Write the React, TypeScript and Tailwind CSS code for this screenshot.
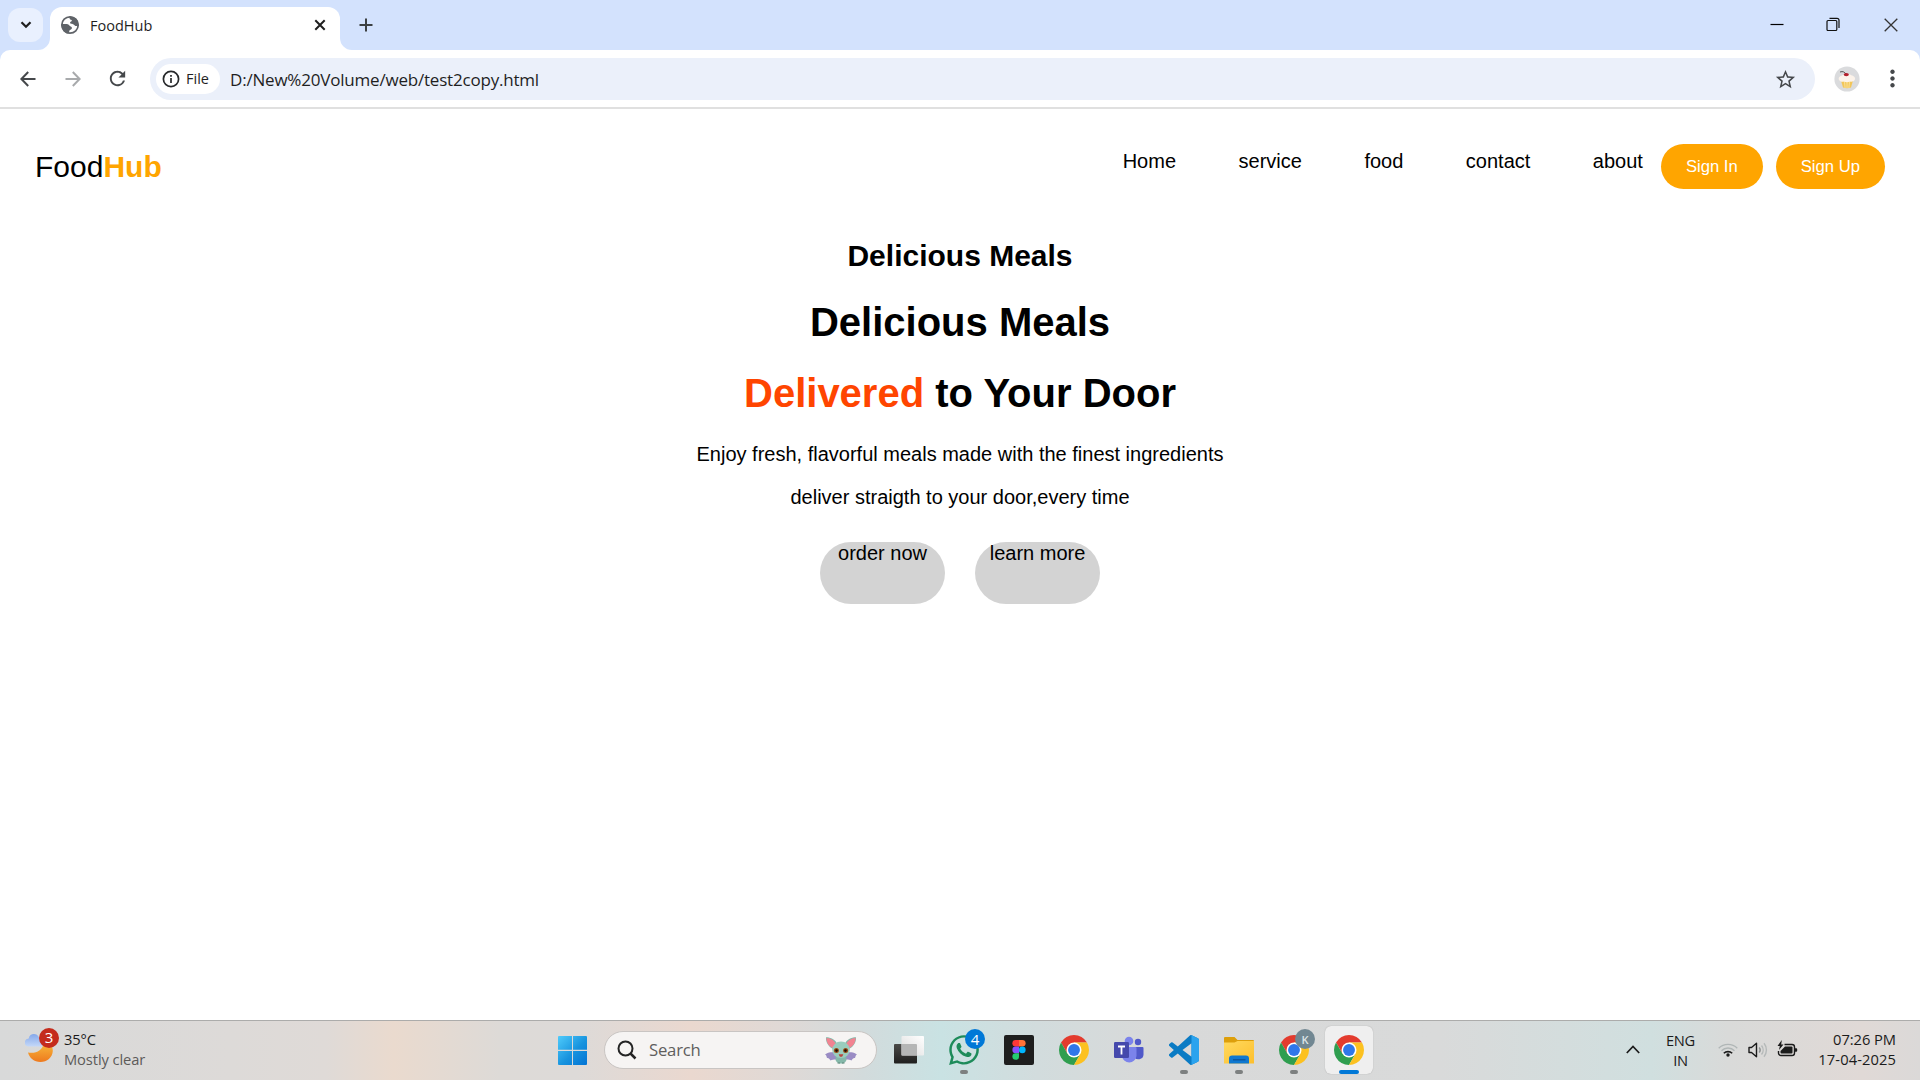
import type { ReactNode } from 'react';
import { MdRefresh, MdStarBorder, MdMoreVert } from 'react-icons/md';
import { FaWhatsapp } from 'react-icons/fa';

const UI = "font-['Open_Sans','Noto_Sans',sans-serif]";
const ARIAL = "font-['Liberation_Sans',Arial,sans-serif]";

function GlobeIcon() {
  return (
    <svg className="mt-[-7px]" width="20" height="20" viewBox="0 0 20 20">
      <circle cx="10" cy="10" r="8.200" fill="#fff" stroke="#5f6368" strokeWidth="1.700" />
      <path d="M9.500 1.500C15 1 18.800 5 18.500 10.500c-1.300.7-3 .8-4-.3-1-1.200-3-.9-4-1.600-1-.9-.2-2.100 1-2.400.8-.3.4-1.200-.5-1.400-1.300-.3-1.700-1.500-1.500-3.300z" fill="#5f6368" />
      <path d="M1.600 9h5c2 0 2.400 1.600 3.600 2.200 1.700.6 2.300 1.700 1.300 2.800-.9.900-2 .8-2.200 2-.1.900-.3 1.800-.8 2.500C4 18 1.200 14 1.600 9z" fill="#5f6368" />
    </svg>
  );
}

function TabStrip() {
  return (
    <div className="flex h-[50px] items-start bg-[#d3e2fd]">
      <div className="ml-2 mt-2 flex h-[34px] w-[35px] items-center justify-center rounded-xl bg-[#e9f0fe]">
        <svg width="12" height="8" viewBox="0 0 12 8" fill="none" stroke="#1f1f1f" strokeWidth="2.2">
          <path d="M1.5 1.2 6 5.8l4.500-4.600" />
        </svg>
      </div>
      <svg className="ml-[-5px] mt-[38px]" width="12" height="12" viewBox="0 0 12 12">
        <path d="M12 0v12H0A12 12 0 0 0 12 0z" fill="#fff" />
      </svg>
      <div className="mt-[7px] flex h-[43px] w-[290px] items-center rounded-t-xl bg-white pl-[10px] pr-[14px]">
        <GlobeIcon />
        <span className="ml-[10px] mt-[-6px] text-[14.500px] leading-5 text-[#1f1f1f]">FoodHub</span>
        <svg className="ml-auto mt-[-7px]" width="12" height="12" viewBox="0 0 12 12" stroke="#1f1f1f" strokeWidth="2">
          <path d="M1.300 1.300l9.400 9.400M10.700 1.300l-9.400 9.400" />
        </svg>
      </div>
      <svg className="mt-[38px]" width="12" height="12" viewBox="0 0 12 12">
        <path d="M0 0v12h12A12 12 0 0 1 0 0z" fill="#fff" />
      </svg>
      <svg className="ml-[7px] mt-[18px]" width="14" height="14" viewBox="0 0 14 14" stroke="#3c4043" strokeWidth="2">
        <path d="M7 .5v13M.5 7h13" />
      </svg>
      <div className="ml-auto flex items-center pr-[22px] pt-[17px]">
        <svg width="14" height="14" viewBox="0 0 14 14" stroke="#000" strokeWidth="1.2">
          <path d="M.5 6.500h13" />
        </svg>
        <svg className="ml-[42px]" width="14" height="15" viewBox="0 0 14 15" fill="none" stroke="#111" strokeWidth="1.200">
          <rect x="1" y="3.500" width="9.800" height="10" rx="1" />
          <path d="M3.500 1.300h7.500a2 2 0 0 1 2 2v7.700" />
        </svg>
        <svg className="ml-[44px]" width="14" height="14" viewBox="0 0 14 14" stroke="#333" strokeWidth="1.300">
          <path d="M.7.700l12.600 12.600M13.300.700.700 13.300" />
        </svg>
      </div>
    </div>
  );
}

function Cupcake() {
  return (
    <svg width="26" height="26" viewBox="0 0 26 26">
      <circle cx="13" cy="13" r="12.600" fill="#dadbdd" />
      <path d="M7 14.500h12l-2 7q-4 1.500-8 0z" fill="#f2c659" />
      <path d="M10.500 15l.6 7M15.500 15l-.6 7M13 15v7" stroke="#fbe19a" strokeWidth="1" />
      <path d="M4.800 13.500C4 11 7 10 7.800 9.500c1.200-2 8-2.200 9.400-.2 3 .5 4.600 2.700 3.600 4.400-1 1.800-3 2.300-4.800 1.800-1.800.9-4.200.9-6 .1-2 .6-4.400-.1-5.200-2.100z" fill="#fcf3ea" />
      <path d="M6 6c3-1 4.500 0 6 2" stroke="#555" strokeWidth="1" fill="none" />
      <ellipse cx="12.300" cy="8.600" rx="2.600" ry="1.600" fill="#b3202c" />
    </svg>
  );
}

function Toolbar() {
  return (
    <div className="bg-[#d3e2fd]">
      <div className="flex h-[59px] items-center rounded-t-[10px] border-b-2 border-[#e0e0e0] bg-white pl-5 pr-[14px]">
        <svg width="16" height="16" viewBox="0 0 16 16" fill="none" stroke="#45484b" strokeWidth="2">
          <path d="M15.500 8H1.500M8.200 1 1.400 8l6.800 7" />
        </svg>
        <svg className="ml-[29px]" width="16" height="16" viewBox="0 0 16 16" fill="none" stroke="#a8aaac" strokeWidth="2">
          <path d="M.5 8h14M7.800 1l6.800 7-6.800 7" />
        </svg>
        <MdRefresh size={23} color="#45484b" className="ml-[25px]" />
        <div className="ml-[21px] flex h-[42px] w-[1665px] items-center rounded-full bg-[#ebf0fa] pl-[6px] pr-[18px]">
          <div className="flex h-[30px] w-[64px] items-center rounded-full bg-white pl-[6px]">
            <svg width="18" height="18" viewBox="0 0 18 18" fill="none" stroke="#27292b" strokeWidth="1.700">
              <circle cx="9" cy="9" r="7.600" />
              <path d="M9 8v5M9 5v1.700" />
            </svg>
            <span className="ml-[6px] text-[14.500px] font-medium leading-5 text-[#1f1f1f]">File</span>
          </div>
          <span className="ml-[10px] mt-[2px] text-[17px] leading-6 tracking-[-0.2px] text-[#1f1f1f]">D:/New%20Volume/web/test2copy.html</span>
          <MdStarBorder size={23} color="#45484b" className="ml-auto mt-px" />
        </div>
        <div className="ml-[19px]">
          <Cupcake />
        </div>
        <MdMoreVert size={27} color="#45484b" className="ml-auto" />
      </div>
    </div>
  );
}

const links = ['Home', 'service', 'food', 'contact', 'about'];

function Page() {
  return (
    <main className={`${ARIAL} h-[911px] overflow-hidden bg-white text-black`}>
      <header className="flex items-start pl-[35px] pr-[35px] pt-[35px]">
        <div className="mt-[6px] text-[30px] leading-[34px]">
          Food<span className="font-bold text-[#ffa500]">Hub</span>
        </div>
        <nav className="ml-auto mt-[6px] flex gap-[62.500px] text-xl leading-[23px]">
          {links.map((l) => (
            <a key={l}>{l}</a>
          ))}
        </nav>
        <div className="ml-[18px] flex gap-[13px] text-[16.670px] leading-[45px] text-white">
          <button className="h-[45px] rounded-full bg-[#ffa500] px-[25px]">Sign In</button>
          <button className="h-[45px] rounded-full bg-[#ffa500] px-[25px]">Sign Up</button>
        </div>
      </header>
      <section className="mt-[50px] flex flex-col items-center text-xl leading-[23px]">
        <h2 className="text-[30px] font-bold leading-[34px]">Delicious Meals</h2>
        <h1 className="mt-[26px] text-[40px] font-bold leading-[46px]">Delicious Meals</h1>
        <h1 className="mt-[25px] text-[40px] font-bold leading-[46px]">
          <span className="text-[#ff4500]">Delivered</span> to Your Door
        </h1>
        <p className="mt-[27px]">Enjoy fresh, flavorful meals made with the finest ingredients</p>
        <p className="mt-5">deliver straigth to your door,every time</p>
        <div className="mt-[33px] flex gap-[30px]">
          <button className="flex h-[62px] w-[125px] justify-center rounded-full bg-[#d3d3d3]">order now</button>
          <button className="flex h-[62px] w-[125px] justify-center rounded-full bg-[#d3d3d3]">learn more</button>
        </div>
      </section>
    </main>
  );
}

function ChromeIcon() {
  return (
    <svg width="30" height="30" viewBox="0 0 48 48">
      <path d="M24 12h20.780A24 24 0 0 0 3.216 12L13.600 30 24 24z" fill="#e33b2e" />
      <path d="M13.600 30 3.216 12A24 24 0 0 0 24 48l10.390-18L24 24z" fill="#2f9e4f" />
      <path d="M34.390 30 24 48a24 24 0 0 0 20.780-36H24v12z" fill="#fcc120" />
      <circle cx="24" cy="24" r="12" fill="#fff" />
      <circle cx="24" cy="24" r="9.500" fill="#2f77ea" />
    </svg>
  );
}

function WhatsAppIcon() {
  return (
    <div className="relative">
      <FaWhatsapp size={34} color="#1d8b5a" className="m-[-2px]" />
      <span className="absolute left-[16px] top-[-6px] flex size-5 items-center justify-center rounded-full bg-[#0078d7] text-[15px] leading-none text-white">4</span>
    </div>
  );
}

function TaskViewIcon() {
  return (
    <svg width="30" height="30" viewBox="0 0 30 30">
      <defs>
        <linearGradient id="tvDark" x1="0" y1="0" x2="0" y2="1">
          <stop offset="0" stopColor="#4a4a48" />
          <stop offset="1" stopColor="#1f1f1e" />
        </linearGradient>
        <linearGradient id="tvLight" x1="1" y1="0" x2="0" y2="1">
          <stop offset="0" stopColor="#ffffff" />
          <stop offset="1" stopColor="#dcdcdc" />
        </linearGradient>
      </defs>
      <rect x="0" y="9" width="23" height="19.500" rx="1" fill="url(#tvDark)" />
      <rect x="7.500" y="1" width="22.500" height="19.500" rx="1" fill="url(#tvLight)" />
      <path d="M7.500 9H22a1 1 0 0 1 1 1v10.500H7.500z" fill="#b5b6b6" />
    </svg>
  );
}

function FigmaIcon() {
  return (
    <svg width="30" height="30" viewBox="0 0 30 30">
      <rect width="30" height="30" rx="2" fill="#1e1e1e" />
      <path d="M15 5h-3.300a3.300 3.300 0 0 0 0 6.600H15z" fill="#ff3737" />
      <path d="M15 5h3.300a3.300 3.300 0 0 1 0 6.600H15z" fill="#ff7237" />
      <path d="M15 11.600h-3.300a3.300 3.300 0 0 0 0 6.600H15z" fill="#874fff" />
      <circle cx="18.300" cy="14.900" r="3.300" fill="#00b6ff" />
      <path d="M15 18.200h-3.300a3.300 3.300 0 1 0 3.300 3.300z" fill="#24cb71" />
    </svg>
  );
}

function TeamsIcon() {
  return (
    <svg width="30" height="30" viewBox="0 0 30 30">
      <circle cx="24" cy="7" r="3.200" fill="#5059c9" />
      <path d="M20 12h8.500a1 1 0 0 1 1 1v6.500a5 5 0 0 1-9.500 2z" fill="#5059c9" />
      <circle cx="15" cy="6" r="4.300" fill="#7b83eb" />
      <path d="M8 12h13.500a1 1 0 0 1 1 1v8a7.300 7.300 0 0 1-14.500 0z" fill="#7b83eb" />
      <rect x="0" y="7" width="15" height="16" rx="1.200" fill="#4549ac" />
      <path d="M4 11.500h7M7.500 11.500v8" stroke="#fff" strokeWidth="1.800" />
    </svg>
  );
}

function VsCodeIcon() {
  return (
    <svg width="30" height="30" viewBox="0 0 24 24">
      <path
        d="M23.150 2.587L18.210.210a1.494 1.494 0 0 0-1.705.290l-9.460 8.630-4.120-3.128a.999.999 0 0 0-1.276.057L.327 7.261A1 1 0 0 0 .326 8.740L3.899 12 .326 15.260a1 1 0 0 0 .001 1.479L1.650 17.940a.999.999 0 0 0 1.276.057l4.120-3.128 9.460 8.630a1.492 1.492 0 0 0 1.704.290l4.942-2.377A1.500 1.500 0 0 0 24 20.060V3.939a1.500 1.500 0 0 0-.850-1.352zm-5.146 14.861L10.826 12l7.178-5.448v10.896z"
        fill="#0a7bc4"
      />
      <path d="M18 .150 23.150 2.587A1.500 1.500 0 0 1 24 3.939V20.060a1.500 1.500 0 0 1-.850 1.350L18 23.850z" fill="#2aa3ee" />
    </svg>
  );
}

function FolderIcon() {
  return (
    <svg width="30" height="30" viewBox="0 0 30 30">
      <defs>
        <linearGradient id="folder" x1="0" y1="0" x2="1" y2="1">
          <stop offset="0" stopColor="#ffd95e" />
          <stop offset="1" stopColor="#fdbf2d" />
        </linearGradient>
      </defs>
      <path d="M0 3a1 1 0 0 1 1-1h9.500l3 3H29a1 1 0 0 1 1 1v5H0z" fill="#dd9f0b" />
      <path d="M0 7.500h10.500L13.500 6H30v22.500H0z" fill="url(#folder)" />
      <path d="M5 28.500v-5a3 3 0 0 1 3-3h14a3 3 0 0 1 3 3v5z" fill="#0f78d0" />
      <path d="M9 24.800h12.500" stroke="#0a4f95" strokeWidth="1.200" />
    </svg>
  );
}

function ProfileChrome() {
  return (
    <div className="relative">
      <ChromeIcon />
      <span className="absolute left-[16px] top-[-6px] flex size-5 items-center justify-center rounded-full bg-[#718792] text-[11px] font-semibold leading-none text-[#dfe5e8]">K</span>
    </div>
  );
}

function WindowsIcon() {
  return (
    <svg width="29" height="29" viewBox="0 0 29 29">
      <defs>
        <linearGradient id="win" x1="0" y1="0" x2="1" y2="1">
          <stop offset="0" stopColor="#4fcbfb" />
          <stop offset="0.550" stopColor="#1793de" />
          <stop offset="1" stopColor="#0273d4" />
        </linearGradient>
      </defs>
      <path d="M1 0h13v13.800H0V1a1 1 0 0 1 1-1zM15 0h13a1 1 0 0 1 1 1v12.800H15zM0 15h14v14H1a1 1 0 0 1-1-1zM15 15h14v13a1 1 0 0 1-1 1H15z" fill="url(#win)" />
    </svg>
  );
}

function BatIcon() {
  return (
    <svg width="32" height="27" viewBox="0 0 32 27">
      <path d="M12 15C8 15 3 15 0 17.500c1.500.5 1.500 2 2 3.500 1.500-.3 2.500.5 3.500 2.500 2-1.200 4.500-1 6.500-1zM20 15c4 0 9 0 12 2.500-1.500.5-1.500 2-2 3.500-1.500-.3-2.500.5-3.500 2.500-2-1.200-4.500-1-6.500-1z" fill="#9a8cc4" />
      <path d="M1 .300C6 .3 10.500 3 12 6.500L8 12C3.500 10 .5 5 1 .300zM31 .300C26 .3 21.500 3 20 6.500l4 5.500c4.500-2 7.500-7 7-11.700z" fill="#86b9ab" />
      <path d="M1.500.900C6 1.200 9.500 3.500 10.800 6.800L7.500 11C3.500 8.500 1.300 5 1.500.900zM30.500.900C26 1.200 22.500 3.500 21.200 6.800l3.300 4.200c4-2.500 6.200-6 6-10.100z" fill="#f28391" />
      <path d="M11 18h10l.5 5q-1 3-3.500 3.500h-4q-2.500-.5-3.500-3.500z" fill="#85b8a9" />
      <ellipse cx="16" cy="12.800" rx="8.800" ry="8.300" fill="#9acdbd" />
      <circle cx="11.400" cy="13.500" r="2.500" fill="#9a4d17" />
      <circle cx="20.600" cy="13.500" r="2.500" fill="#9a4d17" />
      <circle cx="11.500" cy="13.600" r="1.300" fill="#1a0d06" />
      <circle cx="20.500" cy="13.600" r="1.300" fill="#1a0d06" />
      <path d="M13.700 17.300h4.600q-.5 2.600-2.300 2.600t-2.300-2.600z" fill="#b8443f" />
      <path d="M12.500 26h2.500M17 26h2.500" stroke="#5c8578" strokeWidth="1" />
    </svg>
  );
}

function Weather() {
  return (
    <div className="flex w-[540px] items-center pl-[25px]">
      <div className="relative mt-[-12px]">
        <svg width="28" height="34" viewBox="0 0 28 34" className="block">
          <defs>
            <linearGradient id="moon" x1="0" y1="0" x2="0" y2="1">
              <stop offset="0" stopColor="#f8bc3c" />
              <stop offset="1" stopColor="#ee7a1e" />
            </linearGradient>
            <linearGradient id="cloud" x1="0" y1="0" x2="0" y2="1">
              <stop offset="0" stopColor="#84a8ea" />
              <stop offset="1" stopColor="#c4d8f8" />
            </linearGradient>
          </defs>
          <path d="M3 24.500c7 1.500 15-1.500 16-10.500 6 0 9 4 8.800 9C27.500 29.500 22 34 15.500 34 9 34 4.500 30 3 24.500z" fill="url(#moon)" />
          <path d="M4 18.500a4 4 0 0 1-.3-8C4.500 5 12 4.500 14 9.500l3 1v8z" fill="url(#cloud)" />
        </svg>
        <span className="absolute left-[14px] top-0 flex size-5 items-center justify-center rounded-full bg-[#c42b1c] text-[15px] leading-none text-white">3</span>
      </div>
      <div className="ml-[11px] mt-[-3px] text-[14.700px] leading-5 tracking-[-0.1px]">
        <div className="text-[#1b1b1b]">35°C</div>
        <div className="text-[#5d5b5a]">Mostly clear</div>
      </div>
    </div>
  );
}

type TaskbarApp = { id: string; icon: ReactNode; state: 'idle' | 'open' | 'active' };

const apps: TaskbarApp[] = [
  { id: 'taskview', icon: <TaskViewIcon />, state: 'idle' },
  { id: 'whatsapp', icon: <WhatsAppIcon />, state: 'open' },
  { id: 'figma', icon: <FigmaIcon />, state: 'idle' },
  { id: 'chrome', icon: <ChromeIcon />, state: 'idle' },
  { id: 'teams', icon: <TeamsIcon />, state: 'idle' },
  { id: 'vscode', icon: <VsCodeIcon />, state: 'open' },
  { id: 'explorer', icon: <FolderIcon />, state: 'open' },
  { id: 'chrome-k', icon: <ProfileChrome />, state: 'open' },
  { id: 'chrome-active', icon: <ChromeIcon />, state: 'active' },
];

function AppButton({ app }: { app: TaskbarApp }) {
  return (
    <div
      className={`flex h-12 w-12 flex-col items-center rounded-md pt-[9px] ${
        app.state === 'active' ? 'bg-[#efefef] shadow-[0_0_1px_#999]' : ''
      }`}
    >
      {app.icon}
      {app.state === 'open' && <span className="mt-[5px] h-1 w-2 rounded-full bg-[#7d8080]" />}
      {app.state === 'active' && <span className="mt-[5px] h-1 w-5 rounded-full bg-[#0078d7]" />}
    </div>
  );
}

function Tray() {
  return (
    <div className="ml-auto flex items-center pr-6 text-[14.700px] leading-5 text-[#1b1b1b]">
      <svg width="14" height="9" viewBox="0 0 14 9" fill="none" stroke="#1b1b1b" strokeWidth="1.700" className="mt-[-2px]">
        <path d="M.8 8 7 1.500 13.200 8" />
      </svg>
      <div className="ml-[25px] mt-[-2px] w-[31px] text-center tracking-[-0.3px]">
        <div>ENG</div>
        <div>IN</div>
      </div>
      <svg className="ml-[22px] mt-[-3px]" width="20" height="15" viewBox="0 0 20 15" fill="none" strokeWidth="1.300">
        <path d="M.7 6.300a13 13 0 0 1 18.600 0M3.500 8.800a9 9 0 0 1 13 0" stroke="#b0b6b6" />
        <path d="M5.800 11.300a6 6 0 0 1 8.400 0" stroke="#1b1b1b" strokeWidth="1.600" />
        <circle cx="10" cy="13" r="1.700" fill="#1b1b1b" />
      </svg>
      <svg className="ml-[10px] mt-[-2px]" width="20" height="16" viewBox="0 0 20 16" fill="none" strokeWidth="1.400">
        <path d="M1 5.500h2.500L8.500 1.300v13.400L3.500 10.500H1z" stroke="#1b1b1b" strokeLinejoin="round" />
        <path d="M11.200 5.500a4 4 0 0 1 0 5" stroke="#8d9292" />
        <path d="M13.500 3.500a7 7 0 0 1 0 9M16 1.300a10.500 10.500 0 0 1 0 13.400" stroke="#b5b9b9" />
      </svg>
      <svg className="ml-[9px] mt-[-4px]" width="21" height="17" viewBox="0 0 21 17">
        <path d="M7.500 4.500H15a2.500 2.500 0 0 1 2.500 2.500v6a2.500 2.500 0 0 1-2.500 2.500H4A2.500 2.500 0 0 1 1.500 13v-2" fill="none" stroke="#1b1b1b" strokeWidth="1.400" />
        <path d="M8 6.500h6.500a1 1 0 0 1 1 1v5a1 1 0 0 1-1 1h-10a1 1 0 0 1-1-1V11z" fill="#1b1b1b" />
        <path d="M18 8.200h1.200a1 1 0 0 1 1 1v1.600a1 1 0 0 1-1 1H18zM4.800 0 .5 6h2.300L2 10l4.500-5.500H4.200z" fill="#1b1b1b" />
      </svg>
      <div className="ml-[19px] mt-[-3px] w-[79px] text-right">
        <div className="whitespace-nowrap tracking-[-0.05px]">07:26 PM</div>
        <div className="whitespace-nowrap tracking-[0.1px]">17-04-2025</div>
      </div>
    </div>
  );
}

function Taskbar() {
  return (
    <footer className="flex h-[60px] items-center border-t border-[#acacab] bg-[linear-gradient(90deg,#d8d9d9_0%,#dddad8_12%,#dfdad7_17%,#eadace_20.5%,#dddad7_26%,#dddad8_30%,#ead8cf_36%,#dfd9d6_41%,#d2dbdc_45%,#c9e2e3_49%,#d2dcdd_54%,#d8d9d9_60%,#d9dada_75%,#d0dfdf_86%,#d9dad9_90%,#e0d9d6_97%,#dbd9d8_100%)]">
      <Weather />
      <div className="ml-[18px]">
        <WindowsIcon />
      </div>
      <div className="ml-[17px] mt-[-1px] flex h-[38px] w-[273px] items-center rounded-full border border-[#c9c5c3] bg-[#f6f4f3] pl-[12px] pr-[19px]">
        <svg width="20" height="20" viewBox="0 0 20 20" fill="none" stroke="#242424" strokeWidth="2" className="mt-[-1px]">
          <circle cx="8.500" cy="8.500" r="7" />
          <path d="M13.500 13.500l5 5" strokeWidth="2.500" />
        </svg>
        <span className="ml-3 text-[16.700px] leading-6 tracking-[-0.2px] text-[#5f5e5d]">Search</span>
        <div className="ml-auto">
          <BatIcon />
        </div>
      </div>
      <div className="ml-[8px] mt-[-1px] flex gap-[7px]">
        {apps.map((a) => (
          <AppButton key={a.id} app={a} />
        ))}
      </div>
      <Tray />
    </footer>
  );
}

export default function App() {
  return (
    <div className={`${UI} flex h-[1080px] w-[1920px] flex-col overflow-hidden bg-white`}>
      <TabStrip />
      <Toolbar />
      <Page />
      <Taskbar />
    </div>
  );
}
